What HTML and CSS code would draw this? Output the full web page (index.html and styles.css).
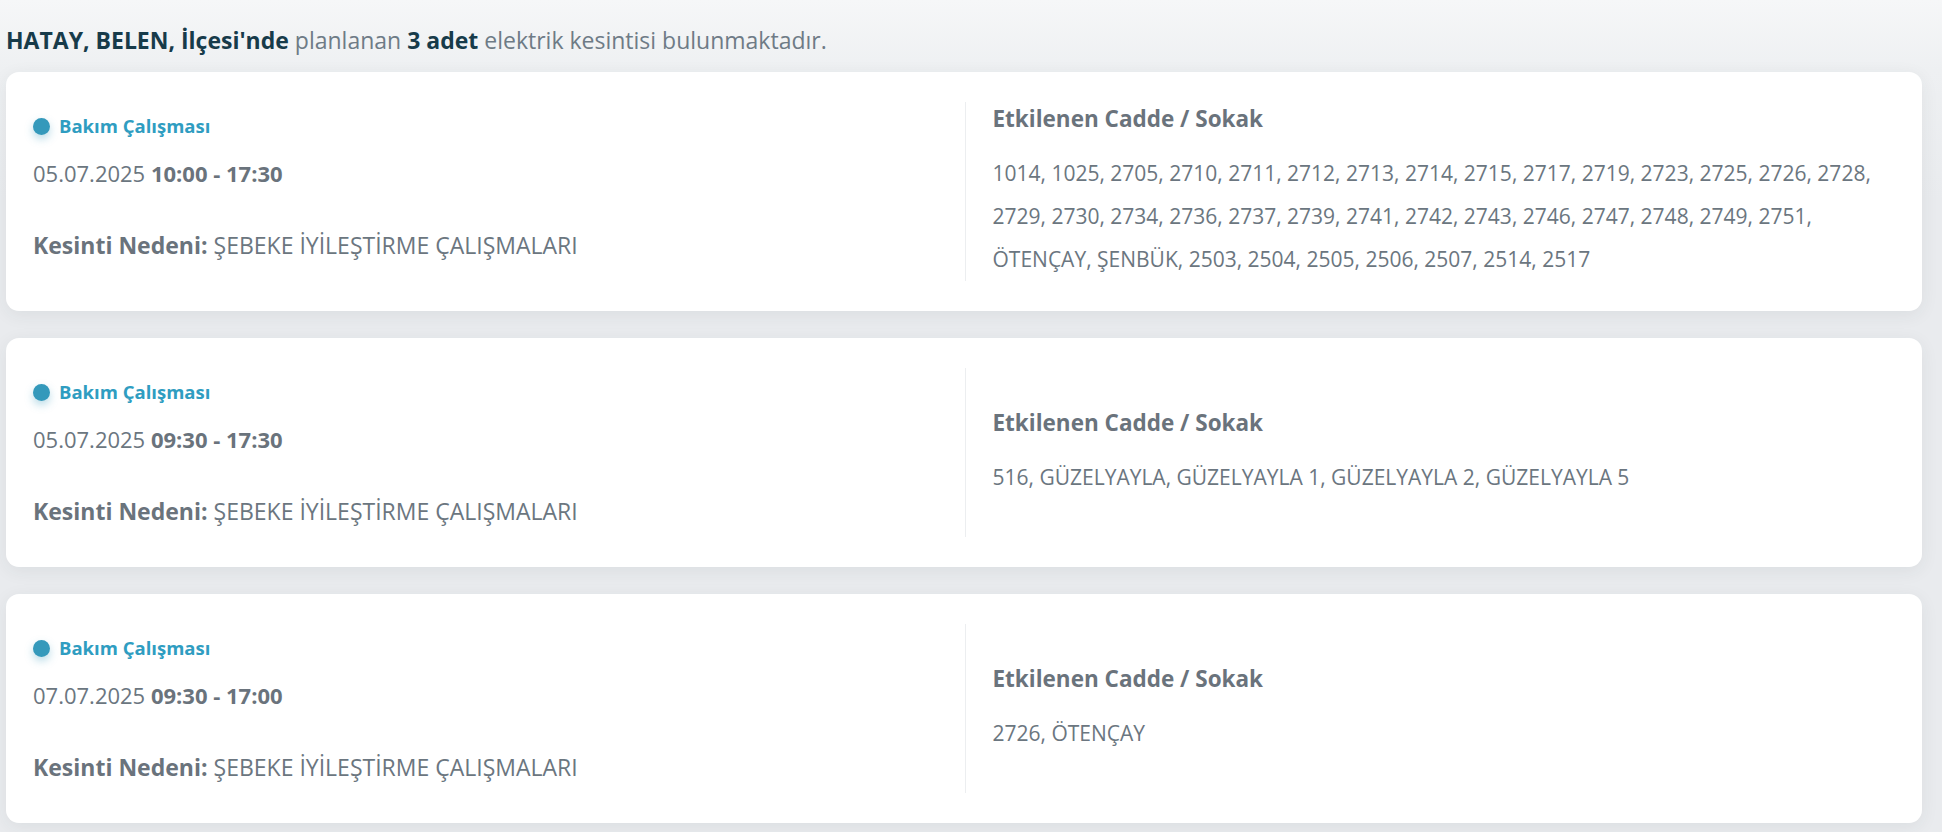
FILE: index.html
```html
<!DOCTYPE html>
<html lang="tr">
<head>
<meta charset="utf-8">
<title>Elektrik Kesintileri</title>
<link rel="stylesheet" href="styles.css">
</head>
<body>
<main class="page">
  <p class="summary"><strong>HATAY, BELEN, İlçesi'nde</strong> planlanan <strong>3 adet</strong> elektrik kesintisi bulunmaktadır.</p>

  <section class="card">
    <div class="col-info">
      <div class="badge"><span class="dot"></span>Bakım Çalışması</div>
      <div class="date">05.07.2025 <b>10:00 - 17:30</b></div>
      <div class="reason"><b>Kesinti Nedeni:</b> ŞEBEKE İYİLEŞTİRME ÇALIŞMALARI</div>
    </div>
    <div class="col-streets">
      <div class="streets-inner">
        <h3 class="streets-title">Etkilenen Cadde / Sokak</h3>
        <p class="streets">1014, 1025, 2705, 2710, 2711, 2712, 2713, 2714, 2715, 2717, 2719, 2723, 2725, 2726, 2728, 2729, 2730, 2734, 2736, 2737, 2739, 2741, 2742, 2743, 2746, 2747, 2748, 2749, 2751, ÖTENÇAY, ŞENBÜK, 2503, 2504, 2505, 2506, 2507, 2514, 2517</p>
      </div>
    </div>
  </section>

  <section class="card">
    <div class="col-info">
      <div class="badge"><span class="dot"></span>Bakım Çalışması</div>
      <div class="date">05.07.2025 <b>09:30 - 17:30</b></div>
      <div class="reason"><b>Kesinti Nedeni:</b> ŞEBEKE İYİLEŞTİRME ÇALIŞMALARI</div>
    </div>
    <div class="col-streets">
      <div class="streets-inner">
        <h3 class="streets-title">Etkilenen Cadde / Sokak</h3>
        <p class="streets">516, GÜZELYAYLA, GÜZELYAYLA 1, GÜZELYAYLA 2, GÜZELYAYLA 5</p>
      </div>
    </div>
  </section>

  <section class="card">
    <div class="col-info">
      <div class="badge"><span class="dot"></span>Bakım Çalışması</div>
      <div class="date">07.07.2025 <b>09:30 - 17:00</b></div>
      <div class="reason"><b>Kesinti Nedeni:</b> ŞEBEKE İYİLEŞTİRME ÇALIŞMALARI</div>
    </div>
    <div class="col-streets">
      <div class="streets-inner">
        <h3 class="streets-title">Etkilenen Cadde / Sokak</h3>
        <p class="streets">2726, ÖTENÇAY</p>
      </div>
    </div>
  </section>
</main>
</body>
</html>
```

FILE: styles.css
```css
* { box-sizing: border-box; }

html, body {
  margin: 0;
  padding: 0;
}

body {
  font-family: "Open Sans", "Noto Sans", sans-serif;
  color: #6b7680;
  background: linear-gradient(180deg, #f6f7f8 0px, #eef0f2 70px, #e9ebee 200px, #e9ebee 100%);
  min-height: 832px;
}

.page {
  padding: 26px 20px 0 6px;
}

.summary {
  margin: 0 0 18px 0;
  font-size: 23px;
  line-height: 28px;
  color: #6e7b86;
}

.summary strong {
  color: #173b4a;
  font-weight: 700;
}

.card {
  display: flex;
  background: #ffffff;
  border-radius: 13px;
  box-shadow: 0 4px 18px rgba(40, 50, 60, 0.07);
  padding: 30px 26px 30px 27px;
  margin-bottom: 27px;
}

.col-info {
  flex: 0 0 50%;
  display: flex;
  flex-direction: column;
  padding: 12px 0 12px 0;
}

.badge {
  display: flex;
  align-items: center;
  font-size: 18.5px;
  line-height: 24px;
  font-weight: 700;
  color: #2f9dc1;
}

.dot {
  width: 17px;
  height: 17px;
  border-radius: 50%;
  background: #3499bb;
  box-shadow: 0 4px 8px rgba(52, 153, 187, 0.35);
  margin-right: 9px;
}

.date {
  margin-top: 21px;
  font-size: 22px;
  line-height: 28px;
}

.date b, .reason b {
  font-weight: 700;
  color: #6a737c;
}

.reason {
  margin-top: 44px;
  font-size: 23px;
  line-height: 28px;
}

.col-streets {
  flex: 0 0 50%;
  display: flex;
  align-items: center;
  border-left: 1px solid #eceef0;
  padding-left: 27px;
}

.streets-title {
  margin: 2px 0 18px 0;
  font-size: 22.5px;
  line-height: 30px;
  font-weight: 700;
  color: #6a737c;
}

.streets {
  margin: 0;
  font-size: 21px;
  line-height: 43px;
  color: #6b7680;
}
```
